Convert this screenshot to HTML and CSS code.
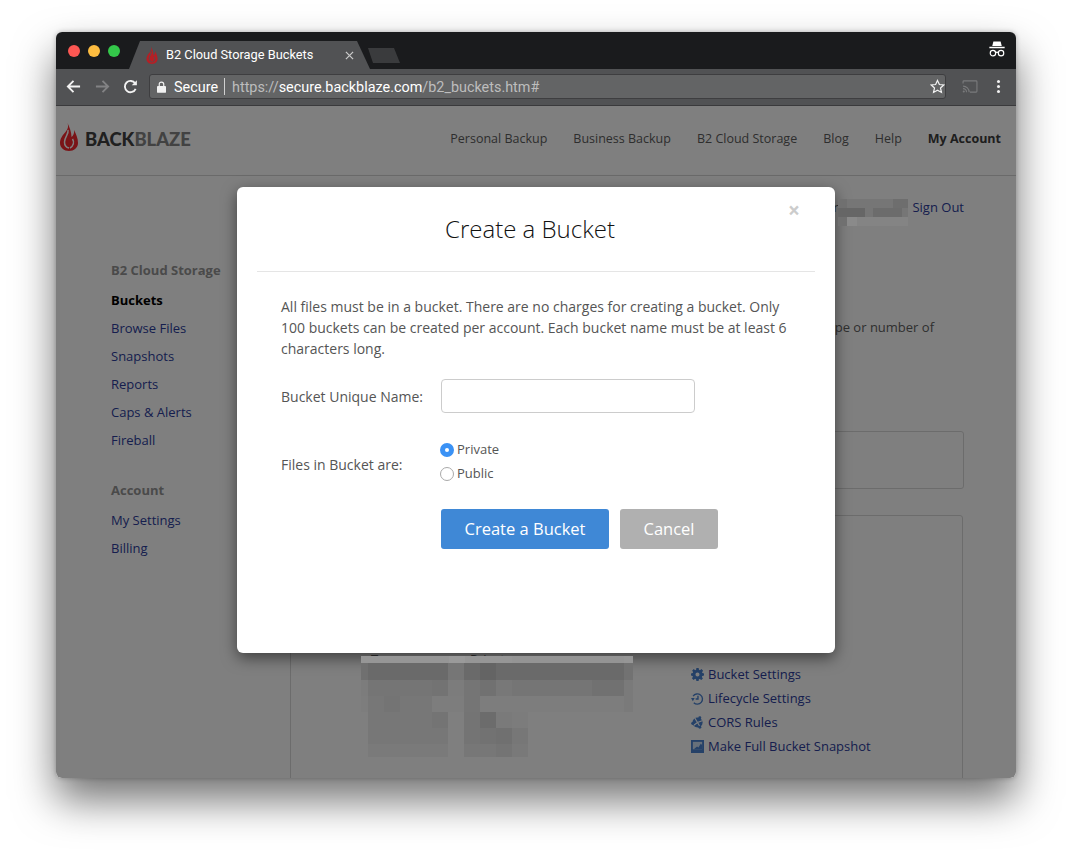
FILE: index.html
```html
<!DOCTYPE html>
<html lang="en">
<head>
<meta charset="utf-8">
<title>B2 Cloud Storage Buckets</title>
<link rel="stylesheet" href="styles.css">
</head>
<body>
<div class="window">
  <div class="tabstrip">
    <div class="lights"><i class="light red"></i><i class="light yellow"></i><i class="light green"></i></div>
    <div class="tab">
      <svg class="favicon" viewBox="0 0 18 29"><path class="flame" d="M7 0C9 4 8 7 5.500 10 2.500 13.500 0 16.500 0 21c0 4.500 4 8 9 8s9-3.500 9-8c0-5-2-9-4-13 .5 3-.5 5.500-2.500 7C11.500 10 9.500 5 7 0z"/><path class="flame-cut-tab" d="M8 8c1 4-3.500 7-3.500 12 0 3 2 5.500 4.500 6M12.500 17c2 3 1 7-2.500 9"/></svg>
      <span class="tab-title">B2 Cloud Storage Buckets</span>
      <svg class="tab-close" viewBox="0 0 10 10"><path d="M1 1l8 8M9 1l-8 8"/></svg>
    </div>
    <div class="newtab"></div>
    <svg class="incognito" viewBox="0 0 20 20"><path class="solid" d="M6 0.500h8l1.300 5H4.700z"/><path class="solid" d="M1.500 6.500h17v1.500h-17z"/><circle class="ring" cx="5.500" cy="13.500" r="3"/><circle class="ring" cx="14.500" cy="13.500" r="3"/><path class="ring" d="M8.500 13c1-.8 2-.8 3 0"/></svg>
  </div>
  <div class="toolbar">
    <svg class="tool" viewBox="0 0 16 16"><path class="stroke" d="M15 8H2M8 2L2 8l6 6"/></svg>
    <svg class="tool dim" viewBox="0 0 16 16"><path class="stroke" d="M1 8h13M8 2l6 6-6 6"/></svg>
    <svg class="tool" viewBox="0 0 16 16"><path class="stroke" d="M13.500 10.500A6 6 0 1 1 13 4.700"/><path class="solid" d="M14.800 1.200v5.500H9.300z"/></svg>
    <div class="omnibox">
      <svg class="lock" viewBox="0 0 10 13"><path class="solid" d="M1 5.500h8a1 1 0 0 1 1 1V12a1 1 0 0 1-1 1H1a1 1 0 0 1-1-1V6.500a1 1 0 0 1 1-1z"/><path class="stroke-thin" d="M2.500 5.500V3.500a2.500 2.500 0 0 1 5 0v2"/></svg>
      <span class="secure">Secure</span>
      <span class="url"><span class="muted">https://</span>secure.backblaze.com<span class="muted">/b2_buckets.htm#</span></span>
      <svg class="star" viewBox="0 0 16 16"><path class="stroke-thin" d="M8 1.500l2 4.400 4.700.5-3.500 3.200 1 4.700L8 11.900l-4.200 2.400 1-4.700L1.300 6.400 6 5.900z"/></svg>
    </div>
    <svg class="cast" viewBox="0 0 18 15"><path class="stroke-thin" d="M1 4V2a1 1 0 0 1 1-1h14a1 1 0 0 1 1 1v11a1 1 0 0 1-1 1H9M1 7a7 7 0 0 1 7 7M1 10a4 4 0 0 1 4 4"/><circle class="solid" cx="1.800" cy="13.200" r="1.200"/></svg>
    <div class="kebab"><i></i><i></i><i></i></div>
  </div>

  <div class="page">
    <header class="site-header">
      <div class="logo">
        <svg class="logo-flame" viewBox="0 0 18 29"><path class="flame-logo" d="M7 0C9 4 8 7 5.500 10 2.500 13.500 0 16.500 0 21c0 4.500 4 8 9 8s9-3.500 9-8c0-5-2-9-4-13 .5 3-.5 5.500-2.500 7C11.500 10 9.500 5 7 0z"/><path class="flame-cut" d="M8 8c1 4-3.500 7-3.500 12 0 3 2 5.500 4.500 6M12.500 17c2 3 1 7-2.500 9"/></svg>
        <span class="wordmark"><b>BACK</b>BLAZE</span>
      </div>
      <nav class="site-nav">
        <a>Personal Backup</a><a>Business Backup</a><a>B2 Cloud Storage</a><a>Blog</a><a>Help</a><a class="current">My Account</a>
      </nav>
    </header>

    <div class="content">
      <aside class="sidebar">
        <h4>B2 Cloud Storage</h4>
        <a class="active">Buckets</a>
        <a>Browse Files</a>
        <a>Snapshots</a>
        <a>Reports</a>
        <a>Caps &amp; Alerts</a>
        <a>Fireball</a>
        <h4 class="second">Account</h4>
        <a>My Settings</a>
        <a>Billing</a>
      </aside>
      <main class="main">
        <div class="account-row">
          <span>User</span>
          <span class="redacted-name">
            <svg class="mosaic" width="70" height="27" shape-rendering="crispEdges">
              <rect x="0" y="0" width="70" height="9" fill="#767676"/><rect x="0" y="0" width="9" height="9" fill="#707070"/><rect x="55" y="0" width="15" height="9" fill="#6e6e6e"/>
              <rect x="0" y="9" width="70" height="9" fill="#767676"/><rect x="0" y="9" width="27" height="9" fill="#666666"/><rect x="35" y="9" width="29" height="9" fill="#6c6c6c"/>
              <rect x="0" y="18" width="70" height="9" fill="#848484"/><rect x="0" y="18" width="9" height="9" fill="#707070"/><rect x="9" y="18" width="10" height="9" fill="#8a8a8a"/>
            </svg>
          </span>
          <a class="signout">Sign Out</a>
        </div>
        <p class="intro">type or number of</p>
        <div class="notice"></div>
        <section class="panel">
          <dl class="details">
            <dt>Type:</dt><dd>Private</dd>
          </dl>
          <svg class="mosaic bucket-mosaic" width="272" height="101" shape-rendering="crispEdges">
            <rect x="0" y="0" width="272" height="7" fill="#969696"/><rect x="88" y="0" width="16" height="7" fill="#9a9a9a"/><rect x="151" y="0" width="112" height="7" fill="#949494"/>
            <rect x="0" y="7" width="272" height="17" fill="#6a6a6a"/><rect x="0" y="7" width="7" height="17" fill="#707070"/><rect x="87" y="7" width="16" height="17" fill="#767676"/><rect x="119" y="7" width="16" height="17" fill="#646464"/><rect x="263" y="7" width="9" height="17" fill="#727272"/>
            <rect x="0" y="24" width="272" height="16" fill="#757575"/><rect x="0" y="24" width="7" height="16" fill="#7c7c7c"/><rect x="71" y="24" width="16" height="16" fill="#737373"/><rect x="87" y="24" width="16" height="16" fill="#7c7c7c"/><rect x="119" y="24" width="16" height="16" fill="#717171"/><rect x="135" y="24" width="16" height="16" fill="#787878"/><rect x="231" y="24" width="32" height="16" fill="#717171"/><rect x="263" y="24" width="9" height="16" fill="#7a7a7a"/>
            <rect x="0" y="40" width="272" height="16" fill="#7d7d7d"/><rect x="7" y="40" width="64" height="16" fill="#777777"/><rect x="23" y="40" width="16" height="16" fill="#747474"/><rect x="103" y="40" width="16" height="16" fill="#757575"/><rect x="263" y="40" width="9" height="16" fill="#7a7a7a"/>
            <rect x="7" y="56" width="64" height="16" fill="#777777"/><rect x="71" y="56" width="16" height="16" fill="#747474"/><rect x="103" y="56" width="16" height="16" fill="#747474"/><rect x="119" y="56" width="16" height="16" fill="#6c6c6c"/><rect x="135" y="56" width="16" height="16" fill="#7a7a7a"/><rect x="151" y="56" width="16" height="16" fill="#7c7c7c"/>
            <rect x="7" y="72" width="80" height="16" fill="#777777"/><rect x="103" y="72" width="16" height="16" fill="#747474"/><rect x="119" y="72" width="16" height="16" fill="#727272"/><rect x="135" y="72" width="16" height="16" fill="#707070"/><rect x="151" y="72" width="16" height="16" fill="#777777"/>
            <rect x="7" y="88" width="80" height="13" fill="#7a7a7a"/><rect x="103" y="88" width="32" height="13" fill="#777777"/><rect x="135" y="88" width="16" height="13" fill="#747474"/><rect x="151" y="88" width="16" height="13" fill="#797979"/>
          </svg>
          <ul class="bucket-links">
            <li><svg class="link-icon" viewBox="0 0 14 14"><path class="icon-fill" fill-rule="evenodd" d="M5.800 0h2.400l.4 1.900 1 .4L11.300 1.200 13 2.900l-1.100 1.600.4 1L14 5.800v2.400l-1.900.4-.4 1 1.100 1.600-1.700 1.700-1.600-1.100-1 .4L8.200 14H5.800l-.4-1.900-1-.4-1.600 1.100L1 11.100l1.100-1.600-.4-1L0 8.200V5.800l1.900-.4.4-1L1.200 2.900 2.900 1.200l1.600 1.100 1-.4zM7 4.800a2.200 2.200 0 1 0 0 4.400 2.200 2.200 0 0 0 0-4.400z"/></svg><a>Bucket Settings</a></li>
            <li><svg class="link-icon" viewBox="0 0 14 14"><path class="icon-line" d="M3 11.500A5.500 5.500 0 1 0 2.300 4.500M7.500 4v3.500H5"/><path class="icon-fill" d="M0 6.500h4L2 10z"/></svg><a>Lifecycle Settings</a></li>
            <li><svg class="link-icon" viewBox="0 0 14 14"><circle class="icon-fill" cx="7" cy="7" r="5.500"/><path class="icon-cut" d="M4 2l3 5-4 3M7 7l5-2M7 7l3 5"/><circle class="icon-fill" cx="9.500" cy="1.800" r="1.600"/><circle class="icon-fill" cx="1.800" cy="8" r="1.600"/><circle class="icon-fill" cx="9.500" cy="12.200" r="1.600"/></svg><a>CORS Rules</a></li>
            <li><svg class="link-icon" viewBox="0 0 14 14"><path class="icon-fill" d="M0 0h14v14H0z"/><path class="icon-window" d="M2 2h10v8H2z"/><path class="icon-fill" d="M3 10l3.500-3 1.500 1 2.500-4L12 5.500V10z"/></svg><a>Make Full Bucket Snapshot</a></li>
          </ul>
        </section>
      </main>
    </div>

    <div class="backdrop">
      <div class="modal">
        <div class="modal-header">
          <h2>Create a Bucket</h2>
          <span class="close">×</span>
        </div>
        <div class="modal-body">
          <p>All files must be in a bucket. There are no charges for creating a bucket. Only 100 buckets can be created per account. Each bucket name must be at least 6 characters long.</p>
          <div class="field name-field">
            <label class="field-label" for="bucket">Bucket Unique Name:</label>
            <input id="bucket" class="text-input" type="text">
          </div>
          <div class="field radio-field">
            <span class="field-label files-label">Files in Bucket are:</span>
            <div class="radios">
              <label class="radio-row"><input type="radio" name="vis" checked><span>Private</span></label>
              <label class="radio-row"><input type="radio" name="vis"><span>Public</span></label>
            </div>
          </div>
          <div class="actions">
            <button class="btn primary" type="button">Create a Bucket</button>
            <button class="btn secondary" type="button">Cancel</button>
          </div>
        </div>
      </div>
    </div>
  </div>
</div>
</body>
</html>
```
FILE: styles.css
```css
* { box-sizing: border-box; }
html, body { margin: 0; height: 858px; overflow: hidden; background: #fff; }
body { padding: 32px 56px 80px; font-family: "Open Sans", sans-serif; }

.window {
  width: 960px; height: 746px; border-radius: 6px; overflow: hidden;
  display: flex; flex-direction: column; background: #fff;
  box-shadow: 0 22px 42px rgba(0,0,0,.55), 0 0 5px rgba(0,0,0,.25);
}
.tabstrip { height: 37px; background: #1a1b1d; display: flex; position: relative; flex: none; }
.lights { display: flex; gap: 8px; padding: 13px 0 0 12px; width: 73px; }
.light { width: 12px; height: 12px; border-radius: 50%; }
.red { background: #fc5753; } .yellow { background: #fdbc40; } .green { background: #34c84a; }

.tab {
  width: 241px; height: 28px; margin-top: 9px; background: #515254;
  clip-path: polygon(0 100%, 11px 0, 228px 0, 241px 100%);
  display: flex; align-items: center; padding-left: 17px;
  font: 12.8px/1 Roboto, sans-serif; color: #fff;
}
.favicon { width: 12px; height: 18px; flex: none; }
.flame { fill: #b51f25; }
.flame-cut-tab { fill: none; stroke: #515254; stroke-width: 1.500; }
.tab-title { margin-left: 8px; width: 179px; white-space: nowrap; }
.tab-close { width: 9px; height: 9px; fill: none; stroke: #c8c8c8; stroke-width: 1.400; }
.newtab {
  width: 32px; height: 15px; margin: 16px 0 0 -2px; background: #3a3b3d;
  clip-path: polygon(0 0, 26px 0, 32px 100%, 5px 100%);
}
.incognito { width: 18px; height: 18px; position: absolute; right: 10px; top: 9px; }
.incognito .solid { fill: #fff; }
.incognito .ring { fill: none; stroke: #fff; stroke-width: 1.300; }

.toolbar {
  height: 37px; flex: none; background: #515254; border-bottom: 1px solid #3a3a3c;
  display: flex; align-items: center; padding: 0 0 1px 10px;
}
.tool { width: 15px; height: 15px; margin-right: 14px; flex: none; }
.tool.dim { opacity: .3; margin-right: 13px; }
.stroke { fill: none; stroke: #f2f2f2; stroke-width: 2; }
.solid { fill: #f2f2f2; }
.stroke-thin { fill: none; stroke: #f2f2f2; stroke-width: 1.300; }
.omnibox {
  width: 797px; height: 25px; margin-left: -3px; flex: none; background: #636465;
  border: 1px solid #3e3e40; border-radius: 3px;
  display: flex; align-items: center; padding-left: 7px;
  font: 14.400px/1 Roboto, sans-serif; color: #fff; white-space: nowrap;
}
.lock { width: 9px; height: 12px; margin-right: 8px; flex: none; }
.secure { padding-right: 6px; border-right: 1px solid #d0d0d0; height: 17px; line-height: 19px; margin-right: 7px; }
.url { flex: 1; padding-top: 3px; }
.muted { color: #bdbdbd; }
.star { width: 15px; height: 15px; margin-right: 0; flex: none; }
.cast { width: 16px; height: 13px; margin-left: 16px; opacity: .25; flex: none; }
.kebab { display: flex; flex-direction: column; gap: 2px; margin-left: 19px; }
.kebab i { width: 3px; height: 3px; border-radius: 50%; background: #f2f2f2; }

.page { position: relative; flex: 1; min-height: 0; overflow: hidden; background: #fff; font-size: 13px; color: #606060; }
.site-header {
  height: 70px; border-bottom: 1px solid #d5d5d5;
  display: flex; align-items: center; justify-content: space-between; padding: 0 15px 3px 4px;
}
.logo { display: flex; align-items: center; gap: 7px; }
.logo-flame { width: 18px; height: 29px; margin-top: -6px; }
.flame-logo { fill: #f5282f; }
.flame-cut { fill: none; stroke: #fff; stroke-width: 1.500; }
.wordmark { font: 900 18.400px/1 Lato, sans-serif; color: #848484; }
.wordmark b { color: #404040; font-weight: 900; }
.site-nav { display: flex; gap: 26px; font-size: 12.500px; margin-top: -2px; }
.site-nav a { color: #5c5c5c; }
.site-nav .current { color: #3c3c3c; font-weight: 700; }

.content { display: flex; }
.sidebar { width: 234px; flex: none; padding: 80px 0 0 55px; display: flex; flex-direction: column; line-height: 28px; }
.sidebar h4 { margin: 0 0 2px; font-size: 13px; font-weight: 700; color: #949494; }
.sidebar .second { margin-top: 22px; }
.sidebar a { color: #2c3c9c; }
.sidebar .active { color: #000; font-weight: 700; }

.main { flex: 1; padding: 21px 52px 0 0; }
.account-row { display: flex; justify-content: flex-end; line-height: 20px; }
.redacted-name { position: relative; width: 72px; }
.mosaic { position: absolute; z-index: 11; display: block; }
.redacted-name .mosaic { left: 0; top: 2px; }
.signout { color: #2c3c9c; margin-left: 2px; }
.intro { margin: 100px 30px 0 0; line-height: 20px; text-align: right; }
.notice { height: 58px; margin-top: 94px; border: 1px solid #d8d8d8; border-radius: 3px; }
.panel {
  position: relative; height: 300px; margin: 26px 1px 0 0; padding-top: 133px;
  border: 1px solid #d8d8d8; border-radius: 3px; display: flex;
}
.details { width: 400px; flex: none; margin: 0; padding-left: 80px; display: grid; grid-template-columns: 99px 1fr; grid-auto-rows: 20px; line-height: 20px; }
.details dd { margin: 0; }
.bucket-mosaic { left: 70px; top: 140px; }
.bucket-links { list-style: none; margin: 13px 0 0; padding: 0; line-height: 24px; }
.bucket-links li { display: flex; align-items: center; gap: 4px; }
.bucket-links a { color: #2c3c9c; }
.link-icon { width: 13px; height: 13px; flex: none; }
.icon-fill { fill: #4a82d0; }
.icon-window { fill: #cfe0f5; }
.icon-line { fill: none; stroke: #4a82d0; stroke-width: 1.500; }
.icon-cut { fill: none; stroke: #fff; stroke-width: 1.200; }

.backdrop {
  position: absolute; inset: 0; z-index: 10; background: rgba(0,0,0,.5);
  display: flex; justify-content: center; align-items: flex-start; padding-top: 81px;
}
.modal {
  width: 598px; height: 466px; background: #fff; border-radius: 6px;
  box-shadow: 0 5px 15px rgba(0,0,0,.5); padding: 0 20px;
  color: #555; font-size: 14px;
}
.modal-header { position: relative; height: 85px; border-bottom: 1px solid #e5e5e5; padding-right: 12px; text-align: center; }
.modal-header h2 { margin: 0; padding-top: 25px; font-size: 24px; line-height: 34px; font-weight: 300; color: #111; }
.close { position: absolute; right: 15px; top: 11px; font-size: 21px; line-height: 24px; font-weight: 700; color: #ccc; }
.modal-body { padding: 24px 0 0 24px; }
.modal-body p { margin: 0; width: 514px; line-height: 21px; }
.field { display: flex; align-items: center; }
.field-label { width: 160px; flex: none; }
.name-field { margin-top: 20px; }
.text-input { width: 254px; height: 34px; border: 1px solid #ccc; border-radius: 4px; background: #fff; }
.radio-field { margin-top: 26px; }
.files-label { margin-top: 6px; }
.radios { display: flex; flex-direction: column; gap: 4px; margin-left: -1px; font-size: 13px; }
.radio-row { display: flex; align-items: center; gap: 3px; line-height: 20px; }
.radio-row input {
  appearance: none; width: 14px; height: 14px; margin: 1px 0 0; border-radius: 50%;
  border: 1px solid #a9a9a9; background: #fff;
}
.radio-row input:checked { border: 5px solid #3b92f5; }
.actions { display: flex; gap: 11px; margin: 26px 0 0 160px; }
.btn { height: 40px; border: 0; border-radius: 3px; color: #fff; font: 16.500px/40px "Open Sans", sans-serif; padding: 0; }
.primary { width: 168px; background: #3f88d6; }
.secondary { width: 98px; background: #b0b0b0; }
```
